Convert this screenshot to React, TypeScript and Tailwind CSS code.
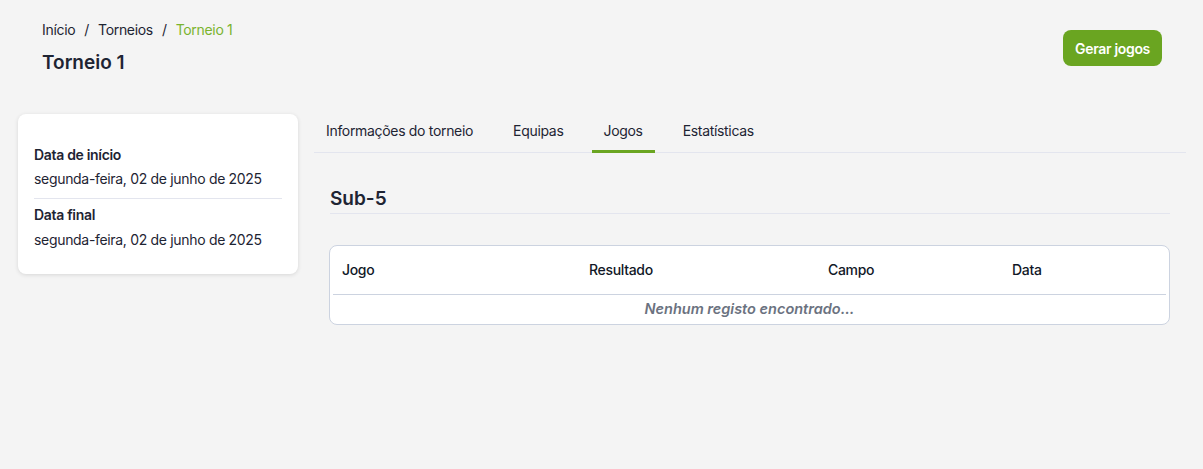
const font = { fontFamily: 'Inter, "Noto Sans", sans-serif' }

function InfoCard() {
  return (
    <div className="w-[280px] shrink-0 rounded-lg bg-white px-4 pt-[31px] pb-[24px] shadow-[0_1px_4px_rgba(0,0,0,0.12)]">
      <div className="pb-[9px] border-b border-[#e3e5ee]">
        <p className="text-[14px] font-semibold text-[#1e2433] leading-[20px]">Data de início</p>
        <p className="mt-[4px] text-[14px] text-[#1e2433] leading-[20px]">segunda-feira, 02 de junho de 2025</p>
      </div>
      <div className="pt-[6px]">
        <p className="text-[14px] font-semibold text-[#1e2433] leading-[20px]">Data final</p>
        <p className="mt-[5px] text-[14px] text-[#1e2433] leading-[20px]">segunda-feira, 02 de junho de 2025</p>
      </div>
    </div>
  )
}

const TABS = ['Informações do torneio', 'Equipas', 'Jogos', 'Estatísticas']

function Tabs() {
  return (
    <div className="flex gap-4 border-b border-[#e3e5ee]">
      {TABS.map((t) => (
        <div
          key={t}
          className={`px-3 pt-[7px] pb-[9px] text-[14px] leading-[20px] text-[#1e2433] border-b-[3px] -mb-[1px] ${
            t === 'Jogos' ? 'border-[#6aa521]' : 'border-transparent'
          }`}
        >
          {t}
        </div>
      ))}
    </div>
  )
}

export default function App() {
  return (
    <div className="min-h-[469px] w-full bg-[#f4f4f4] tracking-[-0.32px]" style={font}>
      <div className="flex items-start justify-between pl-[42px] pr-[41px] pt-[20px]">
        <div>
          <nav className="flex items-center gap-[9px] text-[14px] leading-[20px] text-[#1e2433]">
            <span>Início</span>
            <span>/</span>
            <span>Torneios</span>
            <span>/</span>
            <span className="text-[#7ab32e]">Torneio 1</span>
          </nav>
          <h1 className="mt-[10px] text-[19px] font-semibold leading-[26px] tracking-normal text-[#1e2433]">Torneio 1</h1>
        </div>
        <button className="mt-[10px] h-[36px] rounded-lg bg-[#6aa521] px-3 text-[14px] font-semibold text-white">
          Gerar jogos
        </button>
      </div>

      <div className="mt-[38px] flex items-start gap-4 pl-[18px] pr-[17px]">
        <InfoCard />
        <div className="flex-1">
          <Tabs />
          <div className="px-4">
            <h2 className="mt-[32px] border-b border-[#e3e5ee] text-[19px] font-semibold leading-[28px] tracking-normal text-[#1e2433]">
              Sub-5
            </h2>
            <div className="mt-[31px] -ml-[1px] rounded-lg border border-[#ccd3e0] bg-white px-[3px]">
              <table className="w-full text-left text-[14px] text-[#111827]">
                <thead>
                  <tr className="border-b border-[#ccd3e0]">
                    <th className="h-[48px] w-[256px] pl-[9px] font-medium">Jogo</th>
                    <th className="h-[48px] w-[239px] font-medium">Resultado</th>
                    <th className="h-[48px] w-[184px] font-medium">Campo</th>
                    <th className="h-[48px] font-medium">Data</th>
                  </tr>
                </thead>
                <tbody>
                  <tr>
                    <td colSpan={4} className="h-[30px] text-center text-[14.5px] font-semibold italic tracking-normal text-[#6b7280]">
                      Nenhum registo encontrado...
                    </td>
                  </tr>
                </tbody>
              </table>
            </div>
          </div>
        </div>
      </div>
    </div>
  )
}
